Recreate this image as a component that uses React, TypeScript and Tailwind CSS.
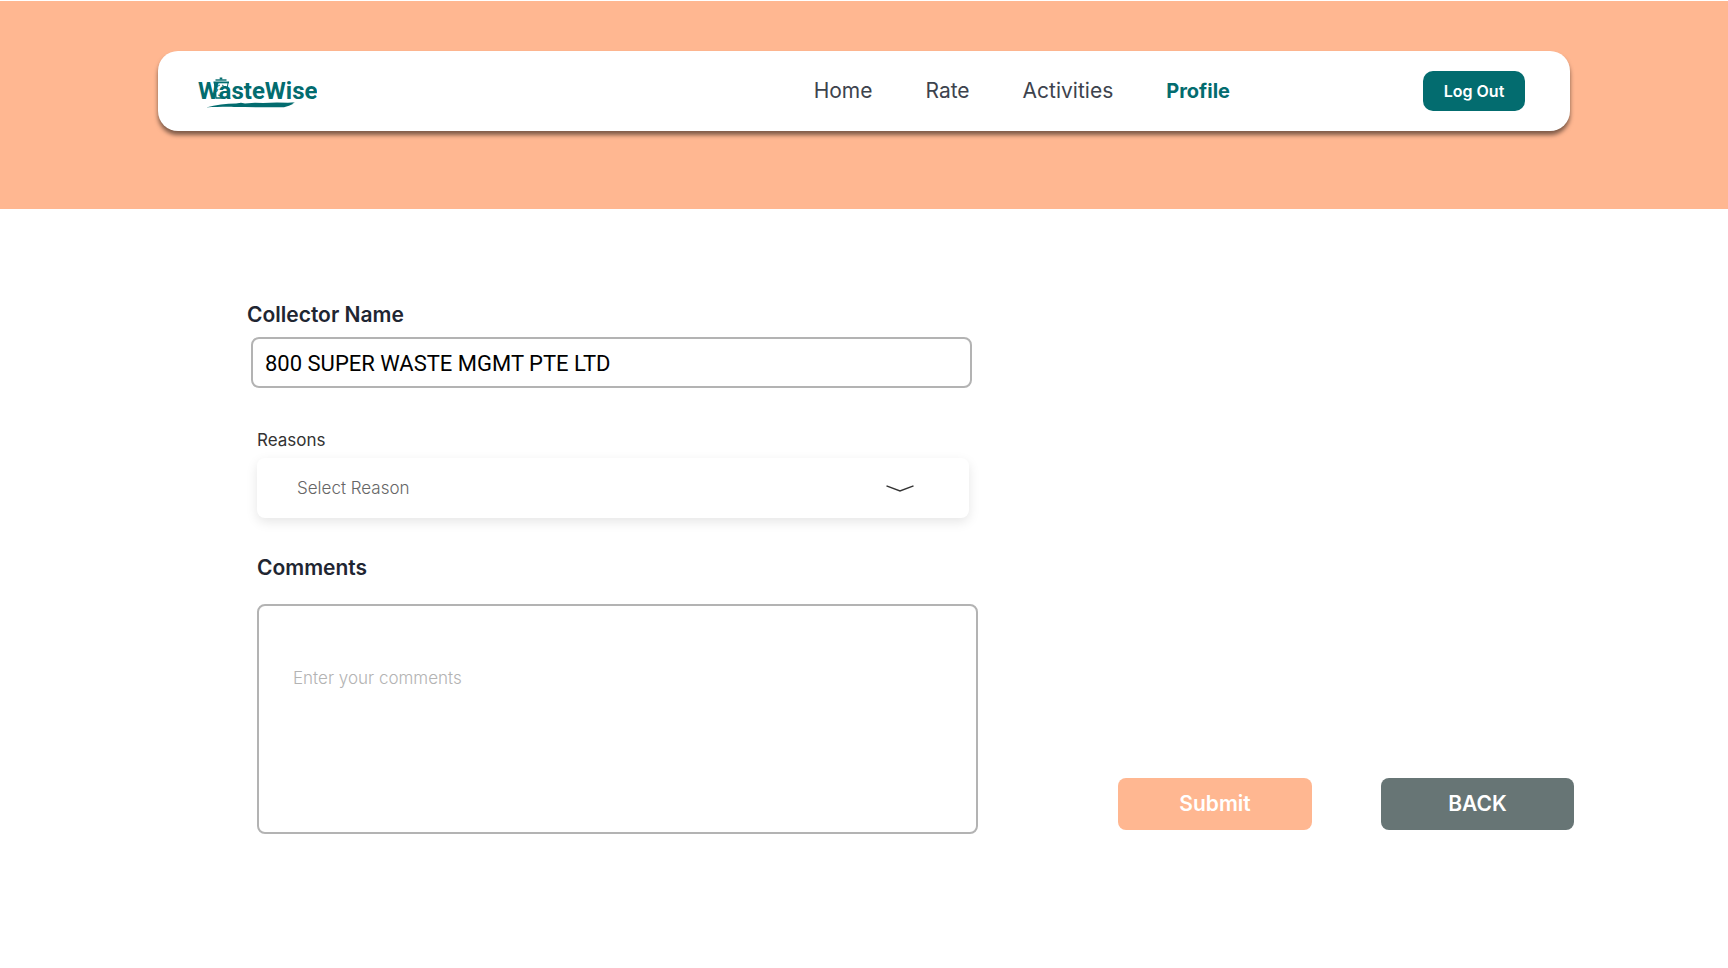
import React, { useState } from "react";

const links = [
  { label: "Home", active: false },
  { label: "Rate", active: false },
  { label: "Activities", active: false },
  { label: "Profile", active: true },
];

const reasons = ["Missed collection", "Late collection", "Damaged bin", "Other"];

function Logo() {
  return (
    <a href="#home" aria-label="WasteWise" className="block">
      <svg width="120" height="34" viewBox="0 0 120 34" fill="none">
        <text x="1" y="25" fill="#036c6f" fontSize="24" fontWeight="700" fontFamily="Roboto, sans-serif">
          WasteWise
        </text>
        <g stroke="#036c6f" strokeWidth="1">
          <path d="M24 3.5V5.5" strokeWidth="2.6" />
          <path d="M18.5 6H29.5" strokeWidth="1.4" />
          <path d="M16.5 8.4H32" strokeWidth="1.8" />
          <path d="M17.5 9L19 24H27" strokeWidth="1.3" />
          <path d="M31 9L30.4 13" />
          <path d="M20 12.5L23 11M25 11L28 13M21 15L19.5 18M27 17L25 20M21 21L24 22" strokeWidth="0.9" />
        </g>
        <path
          d="M9 33.4C19 30.8 29 29.8 39 29.6L44 28.8L48 29.4L58 28.8L66 29L80 28.6L91 28.8L98 28.2L95 29.6L97 29.6L92 31.8L87 33.2C69 33.6 53 32.9 37 32.9C26 32.8 18 33 9 33.4Z"
          fill="#036c6f"
        />
      </svg>
    </a>
  );
}

function Header() {
  return (
    <header className="border-t border-white bg-[#ffb791] px-6 pt-[50px] pb-[78px]">
      <div className="mx-auto flex h-20 max-w-[1412px] items-center rounded-[20px] bg-white pr-[45px] pl-[39px] shadow-[0_4px_4px_rgba(0,0,0,0.5)]">
        <Logo />
        <nav className="ml-auto flex items-center gap-[53px] leading-[30px]">
          {links.map((l) => (
            <a
              key={l.label}
              href={`#${l.label.toLowerCase()}`}
              className={l.active ? "text-[20px] font-bold text-[#036c6f]" : "text-[21px] text-[#3d434d]"}
            >
              {l.label}
            </a>
          ))}
        </nav>
        <button
          type="button"
          className="ml-[193px] h-10 w-[102px] rounded-[10px] bg-[#036c6f] text-[16px] font-semibold text-white"
        >
          Log Out
        </button>
      </div>
    </header>
  );
}

export default function App() {
  const [name, setName] = useState("800 SUPER WASTE MGMT PTE LTD");
  const [reason, setReason] = useState("");
  const [comments, setComments] = useState("");

  return (
    <div className="min-h-screen bg-white font-['Inter',sans-serif]">
      <Header />
      <main className="mx-auto max-w-[1420px] pt-[91px] pb-16">
        <form
          className="flex items-end justify-between gap-8 pl-[93px]"
          onSubmit={(e) => e.preventDefault()}
        >
          <div className="w-full max-w-[731px]">
            <label htmlFor="collector" className="block text-[21px] leading-[30px] font-semibold text-[#1f2632]">
              Collector Name
            </label>
            <div className="mt-[7px] mr-[6px] ml-1">
              <input
                id="collector"
                value={name}
                onChange={(e) => setName(e.target.value)}
                className="block h-[51px] w-full rounded-lg border-2 border-[#b3b3b3] bg-white px-3 pt-[2px] font-['Roboto',sans-serif] text-[22px] text-black"
              />
            </div>

            <div className="ml-[10px]">
              <label htmlFor="reason" className="mt-10 block text-[17px] leading-6 text-[#333333]">
                Reasons
              </label>
              <div className="relative mt-[6px] mr-[9px]">
                <select
                  id="reason"
                  value={reason}
                  onChange={(e) => setReason(e.target.value)}
                  className="block h-[60px] w-full appearance-none rounded-lg bg-white px-10 pt-[2px] text-[17px] font-light text-[#666666] shadow-[0_4px_12px_rgba(0,0,0,0.1)]"
                >
                  <option value="">Select Reason</option>
                  {reasons.map((r) => (
                    <option key={r}>{r}</option>
                  ))}
                </select>
                <svg
                  className="pointer-events-none absolute top-[26px] right-[54px]"
                  width="30"
                  height="9"
                  viewBox="0 0 30 9"
                  fill="none"
                  stroke="#333333"
                  strokeWidth="1.4"
                >
                  <path d="M1.5 1.8L15 7L28.5 1.8" />
                </svg>
              </div>

              <label
                htmlFor="comments"
                className="mt-[35px] block text-[21px] leading-[30px] font-semibold text-[#1f2632]"
              >
                Comments
              </label>
              <textarea
                id="comments"
                value={comments}
                onChange={(e) => setComments(e.target.value)}
                placeholder="Enter your comments"
                className="mt-[21px] block h-[230px] w-full resize-none rounded-lg border-2 border-[#b3b3b3] bg-white px-[34px] pt-[60px] text-[17px] leading-6 font-light text-[#333333] placeholder:text-[#b3b3b3]"
              />
            </div>
          </div>

          <div className="mb-1 flex shrink-0 gap-[69px] text-[21px] font-semibold text-white">
            <button type="submit" className="h-[52px] w-[194px] rounded-lg bg-[#ffb791]">
              Submit
            </button>
            <button type="button" className="h-[52px] w-[193px] rounded-lg bg-[#677575]">
              BACK
            </button>
          </div>
        </form>
      </main>
    </div>
  );
}
